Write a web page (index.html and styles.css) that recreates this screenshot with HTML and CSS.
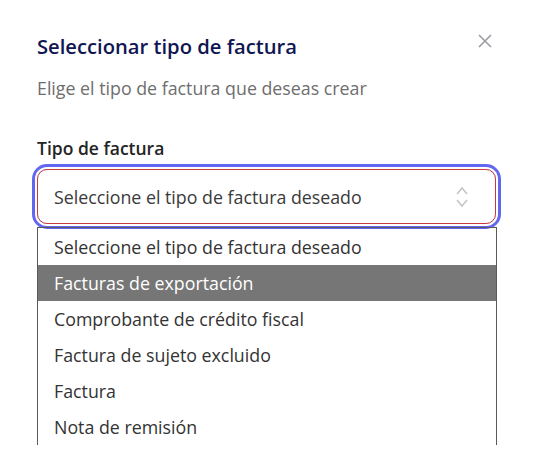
FILE: index.html
```html
<!DOCTYPE html>
<html lang="es">
<head>
<meta charset="utf-8">
<title>Seleccionar tipo de factura</title>
<link rel="stylesheet" href="styles.css">
</head>
<body>
<div class="dialog">
  <div class="header">
    <h1 class="title">Seleccionar tipo de factura</h1>
    <button class="close" aria-label="Cerrar">
      <svg width="14" height="14" viewBox="0 0 14 14"><path d="M1 1L13 13M13 1L1 13" stroke="#9a9ca3" stroke-width="1.6" fill="none"/></svg>
    </button>
  </div>
  <p class="subtitle">Elige el tipo de factura que deseas crear</p>
  <div class="field">
    <label class="label">Tipo de factura</label>
    <div class="select">
      <span class="select-text">Seleccione el tipo de factura deseado</span>
      <svg class="chevrons" width="14" height="24" viewBox="0 0 14 24"><path d="M2 9L7 3L12 9M2 15L7 21L12 15" stroke="#c4c4c4" stroke-width="1.5" fill="none"/></svg>
    </div>
    <ul class="options">
      <li class="option">Seleccione el tipo de factura deseado</li>
      <li class="option active">Facturas de exportación</li>
      <li class="option">Comprobante de crédito fiscal</li>
      <li class="option">Factura de sujeto excluido</li>
      <li class="option">Factura</li>
      <li class="option">Nota de remisión</li>
    </ul>
  </div>
</div>
</body>
</html>
```
FILE: styles.css
```css
* { box-sizing: border-box; }
html, body { margin: 0; padding: 0; background: #fff; }
body { font-family: "Open Sans", "Noto Sans", sans-serif; }
.dialog { padding: 30px 37px 0 37px; width: 534px; }
.header { display: flex; justify-content: space-between; align-items: flex-start; }
.title { margin: 0; font-size: 20.2px; font-weight: 600; color: #0f1652; line-height: 32px; }
.close { border: 0; background: none; padding: 0; margin: 4px 5px 0 0; width: 14px; height: 14px; display: flex; }
.subtitle { margin: 13px 0 0; font-size: 17.8px; color: #6e6e6e; line-height: 26px; }
.field { margin-top: 35px; }
.label { display: block; font-size: 17.5px; font-weight: 600; color: #242424; line-height: 24px; }
.select { margin-top: 9px; width: 459px; height: 55px; border: 1px solid #c93b3b; border-radius: 10px; box-shadow: 0 0 0 2px #fff, 0 0 0 5px #6366f1; display: flex; align-items: center; justify-content: space-between; padding: 0 26px 0 16px; }
.select-text { font-size: 17.8px; color: #3a3a3a; }
.chevrons { display: block; }
.options { list-style: none; margin: 3px 0 0; padding: 1px 0 0; width: 460px; border: 1px solid #5a5a5a; border-bottom: 0; }
.option { height: 36px; line-height: 36px; padding-left: 16px; font-size: 17.8px; color: #333; }
.option.active { background: #767676; color: #fff; }
```
